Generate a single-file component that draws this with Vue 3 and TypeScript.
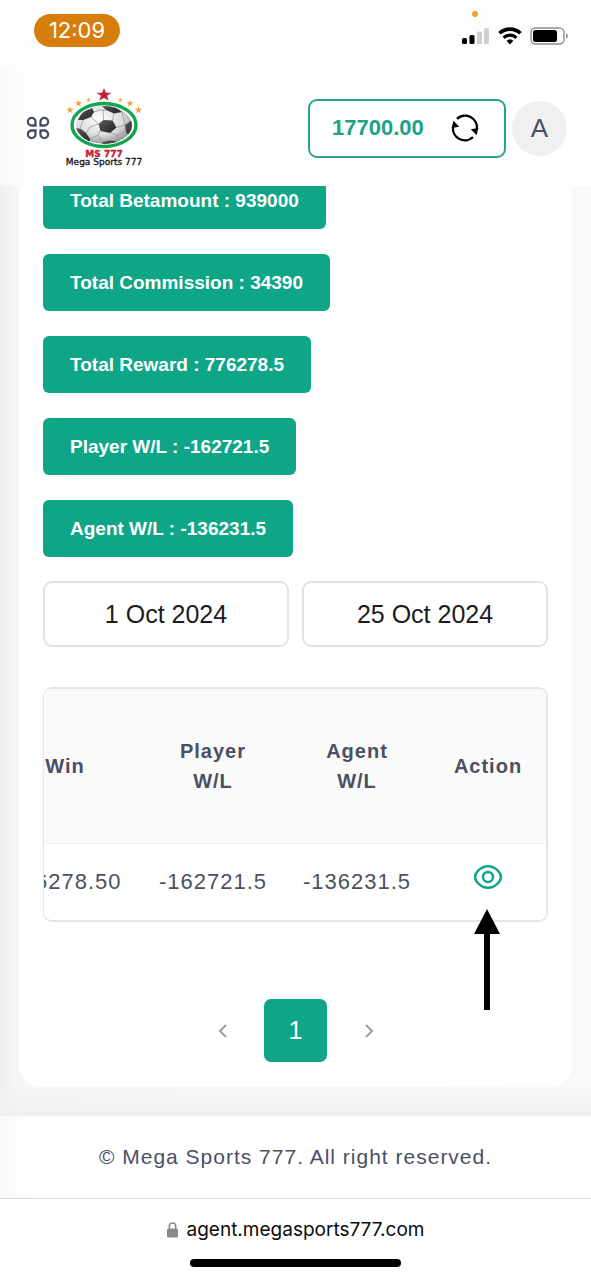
<script setup lang="ts">
import { ref } from 'vue'

interface Stat {
  label: string
  value: string
}

interface Row {
  win: string
  player: string
  agent: string
}

const balance = ref('17700.00')
const dateFrom = ref('1 Oct 2024')
const dateTo = ref('25 Oct 2024')

const stats: Stat[] = [
  { label: 'Total Betamount', value: '939000' },
  { label: 'Total Commission', value: '34390' },
  { label: 'Total Reward', value: '776278.5' },
  { label: 'Player W/L', value: '-162721.5' },
  { label: 'Agent W/L', value: '-136231.5' },
]

const rows: Row[] = [{ win: '776278.50', player: '-162721.5', agent: '-136231.5' }]
</script>

<template>
  <div class="screen">
    <div class="status">
      <span class="clock">12:09</span>
      <div class="signals">
        <i class="mic-dot"></i>
        <svg width="28" height="18" viewBox="0 0 28 18" aria-hidden="true">
          <rect x="0" y="11" width="5" height="6" rx="1.5" fill="#000" />
          <rect x="7.5" y="8" width="5" height="9" rx="1.5" fill="#000" />
          <rect x="15" y="4.5" width="5" height="12.5" rx="1.5" fill="#cfcfcf" />
          <rect x="22" y="1" width="5" height="16" rx="1.5" fill="#cfcfcf" />
        </svg>
        <svg width="24" height="18" viewBox="0 0 24 18" aria-hidden="true">
          <path d="M1.5 6.2a15.500 15.500 0 0 1 21 0" fill="none" stroke="#000" stroke-width="3.6" />
          <path d="M5.600 10.700a9.500 9.500 0 0 1 12.800 0" fill="none" stroke="#000" stroke-width="3.2" />
          <path d="M8.600 13.800a5 5 0 0 1 6.800 0L12 17.400z" fill="#000" />
        </svg>
        <svg width="39" height="18" viewBox="0 0 39 18" aria-hidden="true">
          <rect x="1" y="1" width="33" height="16" rx="4.5" fill="#fff" stroke="#8d8d8d" stroke-width="1.4" />
          <rect x="3" y="3" width="24" height="12" rx="2.5" fill="#000" />
          <path d="M36 6.500q2 .6 2 2.500t-2 2.500z" fill="#8d8d8d" />
        </svg>
      </div>
    </div>

    <header class="header">
      <button class="icon-button" type="button" aria-label="Menu">
        <svg width="24" height="24" viewBox="0 0 24 24" fill="none" stroke="#474e61" stroke-width="2.3" aria-hidden="true">
          <path d="M9.500 9.500H5.700A3.800 3.800 0 1 1 9.500 5.700z" />
          <path d="M14.500 9.500h3.800a3.800 3.800 0 1 0-3.800-3.800z" />
          <path d="M9.500 14.500H5.700a3.800 3.800 0 1 0 3.800 3.800z" />
          <path d="M14.500 14.500h3.800a3.800 3.800 0 1 1-3.800 3.800z" />
        </svg>
      </button>

      <a class="logo" href="#" aria-label="Mega Sports 777">
        <svg width="80" height="80" viewBox="0 0 80 80" aria-hidden="true">
          <defs>
            <radialGradient id="ball" cx=".42" cy=".35" r=".7">
              <stop offset="0" stop-color="#fff" />
              <stop offset=".6" stop-color="#dcdcdc" />
              <stop offset="1" stop-color="#888" />
            </radialGradient>
            <linearGradient id="patch" x1="0" y1="0" x2="1" y2="1">
              <stop offset="0" stop-color="#5c5c5c" />
              <stop offset="1" stop-color="#222" />
            </linearGradient>
            <clipPath id="ball-clip"><ellipse cx="39" cy="37" rx="28" ry="19" /></clipPath>
            <path id="star" d="M0-1 .24-.31.95-.31.38.12.59.81 0 .4-.59.81-.38.12-.95-.31-.24-.31z" />
          </defs>
          <use href="#star" transform="translate(39 7) scale(8 7)" fill="#c5223a" />
          <g fill="#eda13c">
            <use href="#star" transform="translate(23.500 12) scale(2.500)" />
            <use href="#star" transform="translate(13.500 15.500) scale(3.700)" />
            <use href="#star" transform="translate(5 22) scale(3.900)" />
            <use href="#star" transform="translate(55.500 12) scale(2.500)" />
            <use href="#star" transform="translate(65 15.500) scale(3.700)" />
            <use href="#star" transform="translate(73.500 22) scale(3.900)" />
          </g>
          <ellipse cx="39" cy="37" rx="32" ry="21.5" fill="#fff" stroke="#12a650" stroke-width="3.4" />
          <g clip-path="url(#ball-clip)">
            <ellipse cx="39" cy="37" rx="28" ry="19" fill="url(#ball)" />
            <g fill="url(#patch)">
              <path d="m33.500 36 5-4 9 .5 4 7-6.500 5.500-9.500-2z" />
              <path d="m13 32 4-8 10-4 2 4-3 5-8 3z" />
              <path d="m36 17 12 0 9 7-8 1.500-8-3.500z" />
              <path d="m60 37 7-5 2 10-5 6-3-4z" />
              <path d="m11 40 5 1 5 4 4 6v6l-14-8z" />
              <path d="m36 58 2-4 7-1.500 7 1-4 5z" />
            </g>
            <g fill="none" stroke="#999" stroke-width=".8">
              <path d="m29 24 6-2 6 0M38 22l.5 10M26 29l7.500 7M18 32l-3 9M35.500 42 33 47l5 7M25 51l8-4M21 45l4-6 8.500-3M45 44.500l7 3 0 6M52 47.500l9-4M51.500 39.500l8.500-2.500M47.500 32.500 49 25M57 24l3 13" />
            </g>
          </g>
          <text class="logo-short" x="39" y="69" text-anchor="middle">MS 777</text>
          <text class="logo-name" x="39" y="77" text-anchor="middle">Mega Sports 777</text>
        </svg>
      </a>

      <button class="balance" type="button">
        <span>{{ balance }}</span>
        <svg width="30" height="30" viewBox="0 0 30 30" aria-hidden="true">
          <g fill="none" stroke="#000" stroke-width="2.4">
            <path d="M7 5.800A12 12 0 0 1 27 16" />
            <path d="M23 24.200A12 12 0 0 1 3 14" />
          </g>
          <path d="M20.800 16.200 28.300 15 26.600 22.300z" fill="#000" />
          <path d="M9.200 13.800 1.700 15 3.400 7.700z" fill="#000" />
        </svg>
      </button>
      <button class="avatar" type="button" aria-label="Account">A</button>
    </header>

    <main class="page">
      <section class="card">
        <div class="stats">
          <button v-for="stat in stats" :key="stat.label" class="stat" type="button">
            {{ stat.label }} : {{ stat.value }}
          </button>
        </div>

        <div class="dates">
          <input v-model="dateFrom" type="text" aria-label="From date" />
          <input v-model="dateTo" type="text" aria-label="To date" />
        </div>

        <div class="records">
          <div class="table-clip">
            <table>
              <colgroup>
                <col class="col-win" />
                <col class="col-amount" />
                <col class="col-amount" />
                <col class="col-action" />
              </colgroup>
              <thead>
                <tr>
                  <th scope="col">Win</th>
                  <th scope="col">Player<br />W/L</th>
                  <th scope="col">Agent<br />W/L</th>
                  <th scope="col">Action</th>
                </tr>
              </thead>
              <tbody>
                <tr v-for="row in rows" :key="row.win">
                  <td>{{ row.win }}</td>
                  <td>{{ row.player }}</td>
                  <td>{{ row.agent }}</td>
                  <td>
                    <button class="icon-button view" type="button" aria-label="View">
                      <svg width="30" height="26" viewBox="0 0 30 26" fill="none" stroke="#0fa587" stroke-width="2.4" aria-hidden="true">
                        <path d="M2 13C2 9 7.500 2.200 15 2.200S28 9 28 13 22.500 23.800 15 23.800 2 17 2 13z" />
                        <circle cx="15" cy="13" r="5" />
                      </svg>
                    </button>
                  </td>
                </tr>
              </tbody>
            </table>
          </div>
          <svg class="pointer" width="26" height="101" viewBox="0 0 26 101" aria-hidden="true">
            <path d="M13 0 26 25H16V101H10V25H0z" fill="#000" />
          </svg>
        </div>

        <nav class="pager" aria-label="Pages">
          <button class="step" type="button" aria-label="Previous page">
            <svg width="10" height="16" viewBox="0 0 10 16" aria-hidden="true">
              <path d="M8 2 2 8l6 6" />
            </svg>
          </button>
          <button class="current" type="button" aria-current="page">1</button>
          <button class="step" type="button" aria-label="Next page">
            <svg width="10" height="16" viewBox="0 0 10 16" aria-hidden="true">
              <path d="m2 2 6 6-6 6" />
            </svg>
          </button>
        </nav>
      </section>
    </main>

    <footer class="footer">© Mega Sports 777. All right reserved.</footer>

    <div class="browser">
      <a class="address" href="#">
        <svg width="11" height="16" viewBox="0 0 11 16" aria-hidden="true">
          <rect x="0" y="6.5" width="11" height="9" rx="1.5" fill="#8a8a8a" />
          <path d="M2.300 7V4.300a3.200 3.200 0 0 1 6.400 0V7" fill="none" stroke="#8a8a8a" stroke-width="1.5" />
        </svg>
        agent.megasports777.com
      </a>
      <i class="home-bar"></i>
    </div>
  </div>
</template>

<style>
body {
  margin: 0;
  background: #fff;
}
</style>

<style scoped>
.screen {
  font-family: "Liberation Sans", Arial, sans-serif;
  color: #4a5064;
  background: #fff;
}

.screen * {
  box-sizing: border-box;
}

button,
input {
  margin: 0;
  font-family: inherit;
}

button {
  cursor: pointer;
}

svg {
  display: block;
}

.status {
  display: flex;
  justify-content: space-between;
  align-items: flex-start;
  height: 70px;
  padding: 14px 22px 0 34px;
  background: #fdfdfd;
}

.clock {
  width: 86px;
  border-radius: 17px;
  background: #d67e0c;
  color: #fff;
  font: 22px/33px Inter, sans-serif;
  text-align: center;
}

.signals {
  position: relative;
  display: flex;
  gap: 8px;
  padding-top: 13px;
}

.mic-dot {
  position: absolute;
  left: 10px;
  top: -3px;
  width: 6px;
  height: 6px;
  border-radius: 50%;
  background: #eea02b;
}

.header {
  position: relative;
  display: flex;
  align-items: center;
  height: 116px;
  padding: 0 24px 0 26px;
  background: linear-gradient(90deg, #f8f8fb, #fff 30px);
}

.icon-button {
  padding: 0;
  border: 0;
  background: none;
}

.logo {
  margin: 0 auto 0 15px;
}

.logo-short {
  fill: #c5223a;
  stroke: #c5223a;
  stroke-width: 0.4px;
  font: bold 9px "DejaVu Sans", sans-serif;
}

.logo-name {
  fill: #111;
  stroke: #111;
  stroke-width: 0.3px;
  font: 9px "DejaVu Sans", sans-serif;
}

.balance {
  display: flex;
  justify-content: space-between;
  align-items: center;
  width: 198px;
  height: 59px;
  padding: 0 24px 0 22px;
  border: 2px solid #27a58a;
  border-radius: 9px;
  background: #fff;
  color: #1ba386;
  font-size: 22px;
  font-weight: bold;
}

.avatar {
  width: 55px;
  height: 55px;
  margin-left: 6px;
  padding: 0;
  border: 0;
  border-radius: 50%;
  background: #f0f0f0;
  color: #4a5064;
  font-size: 26px;
}

.page {
  overflow: hidden;
  padding: 0 19px 29px;
  background:
    linear-gradient(0deg, #f0f0ee, transparent 28px),
    linear-gradient(90deg, #f0f0ee, #f6f6f4 19px, #f9f9f7 96%);
}

.card {
  margin-top: -14px;
  padding: 0 24px 25px;
  border-radius: 22px;
  background: #fff;
}

.stats {
  display: flex;
  flex-direction: column;
  align-items: flex-start;
  gap: 25px;
}

.stat {
  height: 57px;
  padding: 0 27px;
  border: 0;
  border-radius: 6px;
  background: #0fa587;
  color: #fff;
  font-size: 19px;
  font-weight: bold;
}

.dates {
  display: flex;
  gap: 13px;
  margin-top: 24px;
}

.dates input {
  flex: 1;
  min-width: 0;
  height: 66px;
  padding: 0 12px;
  border: 2px solid #e3e3e3;
  border-radius: 9px;
  background: #fff;
  color: #1c1c1f;
  font-size: 25px;
  text-align: center;
}

.records {
  position: relative;
  margin-top: 40px;
}

.table-clip {
  display: flex;
  justify-content: flex-end;
  overflow: hidden;
  border: 1px solid #e6e6e6;
  border-top-width: 2px;
  border-right-width: 2px;
  border-bottom-width: 2px;
  border-radius: 9px;
}

table {
  flex: 1 0 auto;
  width: 558px;
  table-layout: fixed;
  border-collapse: collapse;
  font-size: 22px;
  line-height: 30px;
  letter-spacing: 1px;
}

.col-win {
  width: 152px;
}

.col-amount {
  width: 144px;
}

.col-action {
  width: 118px;
}

th {
  height: 154px;
  padding: 0 0 0 2px;
  border-bottom: 1px solid #efefef;
  background: #fafaf9;
  font-size: 20px;
}

td {
  height: 77px;
  padding: 0 0 0 2px;
  text-align: center;
}

.view {
  display: block;
  margin: 0 auto 10px;
}

.pointer {
  position: absolute;
  top: 222px;
  right: 48px;
}

.pager {
  display: flex;
  justify-content: center;
  align-items: center;
  gap: 20px;
  margin-top: 77px;
}

.current {
  width: 63px;
  height: 63px;
  padding: 0;
  border: 0;
  border-radius: 7px;
  background: #0fa587;
  color: #fff;
  font-size: 25px;
}

.step {
  display: flex;
  justify-content: center;
  align-items: center;
  width: 43px;
  height: 63px;
  padding: 0;
  border: 0;
  background: none;
}

.step path {
  fill: none;
  stroke: #9d9d9d;
  stroke-width: 2;
}

.footer {
  padding: 26px 16px;
  background: linear-gradient(90deg, #f9f9fc, #fff 30px);
  font-size: 21px;
  line-height: 30px;
  letter-spacing: 1px;
  text-align: center;
}

.browser {
  display: flex;
  flex-direction: column;
  align-items: center;
  padding: 18px 0 13px;
  border-top: 1px solid #dcdcdc;
  background: #fff;
}

.address {
  display: flex;
  align-items: center;
  gap: 9px;
  color: #0a0a0a;
  font: 19px/26px Inter, sans-serif;
  text-decoration: none;
}

.home-bar {
  width: 211px;
  height: 8px;
  margin-top: 16px;
  border-radius: 4px;
  background: #000;
}
</style>
